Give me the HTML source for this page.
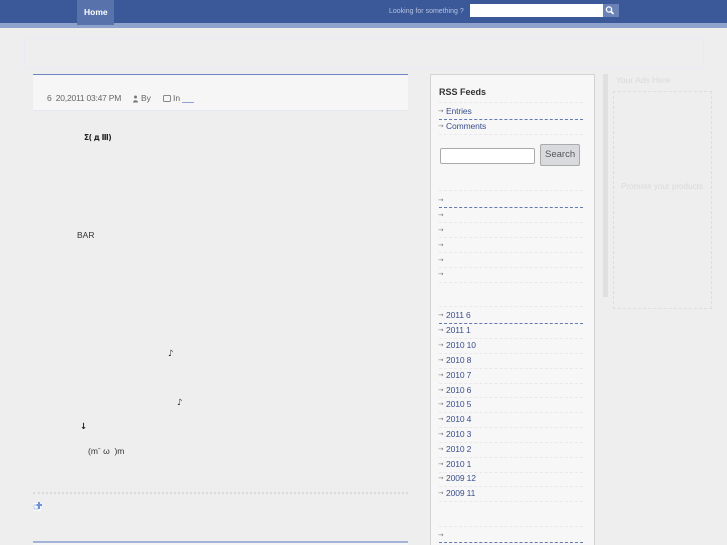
<!DOCTYPE html>
<html>
<head>
<meta charset="utf-8">
<style>
html,body{margin:0;padding:0;}
body{width:727px;height:545px;overflow:hidden;background:#eeeeee;position:relative;font-family:"Liberation Sans","DejaVu Sans","Noto Sans CJK JP",sans-serif;font-size:8.5px;color:#444;}
#w{position:absolute;left:0;top:0;width:727px;height:545px;overflow:hidden;filter:blur(.35px);}
.a{position:absolute;}
.t{position:absolute;white-space:nowrap;line-height:10px;}
.l{position:absolute;left:446px;color:#3b4f8c;white-space:nowrap;line-height:10px;font-size:8.5px;letter-spacing:-.12px;}
.ar{position:absolute;left:438px;width:7px;height:10px;color:#777;font-family:"DejaVu Sans",sans-serif;font-size:6.5px;}
.d{position:absolute;left:439px;width:144px;height:0;border-top:1px dashed #e9e9e9;}
.db{position:absolute;left:439px;width:144px;height:0;border-top:1px dashed #6579b0;}
.u{font-family:"DejaVu Sans",sans-serif;color:#222;}
</style>
</head>
<body>
<div id="w">
<div class="a" style="left:0;top:0;width:727px;height:23px;background:#3b5998;"></div>
<div class="a" style="left:0;top:23px;width:727px;height:5px;background:#8fa2cd;"></div>
<div class="a" style="left:77px;top:0;width:37px;height:25px;background:#5873ab;"></div>
<div class="t" style="left:84px;top:7px;color:#fff;font-weight:bold;font-size:8.5px;">Home</div>
<div class="t" style="left:389px;top:7px;color:#b4c2e0;font-size:7px;">Looking for something ?</div>
<div class="a" style="left:470px;top:4px;width:133px;height:13px;background:#fff;"></div>
<div class="a" style="left:603px;top:4px;width:16px;height:13px;background:#6a82b6;"></div>
<svg class="a" style="left:604px;top:5px;" width="12" height="11" viewBox="0 0 12 11"><circle cx="5" cy="4.500" r="2.600" fill="none" stroke="#fff" stroke-width="1.300"/><path d="M7 6.500L9.500 9" stroke="#fff" stroke-width="1.600"/></svg>

<div class="a" style="left:24px;top:38px;width:678px;height:28px;border:1px solid #e8ecf2;"></div>

<div class="a" style="left:33px;top:74px;width:375px;height:35px;background:#f6f6f6;border-top:1px solid #6f86c4;border-bottom:1px solid #e4e8f0;"></div>
<div class="t" style="left:47px;top:93px;color:#666;letter-spacing:-.22px;">6&nbsp; 20,2011 03:47 PM</div>
<svg class="a" style="left:132px;top:95px;" width="7" height="8" viewBox="0 0 7 8"><circle cx="3.500" cy="2" r="1.500" fill="#777"/><path d="M1 7.500C1 4.500 6 4.500 6 7.500Z" fill="#777"/></svg>
<div class="t" style="left:141px;top:93px;color:#666;">By</div>
<svg class="a" style="left:163px;top:95px;" width="8" height="7" viewBox="0 0 8 7"><rect x=".5" y=".5" width="7" height="6" rx="1" fill="none" stroke="#888"/></svg>
<div class="t" style="left:173px;top:93px;color:#666;">In</div>
<div class="a" style="left:182px;top:102px;width:12px;height:1px;background:#8fa3d0;"></div>

<div class="t u" style="left:84px;top:133px;font-size:7.5px;font-weight:bold;letter-spacing:-.45px;">Σ( д Ⅲ)</div>
<div class="t" style="left:77px;top:230px;color:#333;">BAR</div>
<div class="t u" style="left:168px;top:349px;">♪</div>
<div class="t u" style="left:177px;top:398px;">♪</div>
<div class="t u" style="left:80px;top:422px;font-weight:bold;">↓</div>
<div class="t" style="left:88px;top:446px;color:#333;font-size:8.5px;">(m&#713; ω&nbsp; )m</div>

<div class="a" style="left:33px;top:492px;width:375px;height:0;border-top:2px dotted #dadada;"></div>
<svg class="a" style="left:33px;top:501px;" width="10" height="11" viewBox="0 0 10 11"><rect x="0" y="2" width="8" height="8" fill="#f8f9fc"/><rect x="1" y="4" width="4" height="4" fill="none" stroke="#a9bde4" stroke-width=".8"/><path d="M6 1V8M3.500 4H9" stroke="#6f93d8" stroke-width="2"/></svg>
<div class="a" style="left:33px;top:541px;width:375px;height:2px;background:#a2b3d6;"></div>
<div class="a" style="left:33px;top:543px;width:375px;height:2px;background:#f6f6f6;"></div>

<div class="a" style="left:430px;top:74px;width:163px;height:471px;background:#f7f7f7;border:1px solid #d2d2d2;border-bottom:none;"></div>
<div class="t" style="left:439px;top:87px;color:#333;font-weight:bold;font-size:9px;">RSS Feeds</div>
<div class="d" style="top:102px;"></div>

<div class="t ar" style="top:106px;">→</div>
<div class="l" style="top:106px;">Entries</div>
<div class="db" style="top:119px;"></div>
<div class="t ar" style="top:121px;">→</div>
<div class="l" style="top:121px;">Comments</div>
<div class="d" style="top:134px;"></div>

<div class="a" style="left:440px;top:148px;width:93px;height:14px;background:#fff;border:1px solid #aaa;border-radius:2px;"></div>
<div class="a" style="left:540px;top:144px;width:38px;height:20px;background:#d8dade;border:1px solid #aaa;border-radius:2px;"></div>
<div class="t" style="left:545px;top:150px;color:#555;font-size:9.5px;">Search</div>

<div class="d" style="top:190px;"></div>
<div class="t ar" style="top:195px;">→</div>
<div class="db" style="top:207px;"></div>
<div class="t ar" style="top:210px;">→</div>
<div class="d" style="top:222px;"></div>
<div class="t ar" style="top:225px;">→</div>
<div class="d" style="top:237px;"></div>
<div class="t ar" style="top:240px;">→</div>
<div class="d" style="top:252px;"></div>
<div class="t ar" style="top:255px;">→</div>
<div class="d" style="top:267px;"></div>
<div class="t ar" style="top:269px;">→</div>
<div class="d" style="top:282px;"></div>

<div class="d" style="top:306px;"></div>
<div class="t ar" style="top:310px;">→</div>
<div class="l" style="top:310px;">2011 6</div>
<div class="db" style="top:323px;"></div>
<div class="t ar" style="top:325px;">→</div>
<div class="l" style="top:325px;">2011 1</div>
<div class="d" style="top:338px;"></div>
<div class="t ar" style="top:340px;">→</div>
<div class="l" style="top:340px;">2010 10</div>
<div class="d" style="top:353px;"></div>
<div class="t ar" style="top:355px;">→</div>
<div class="l" style="top:355px;">2010 8</div>
<div class="d" style="top:368px;"></div>
<div class="t ar" style="top:370px;">→</div>
<div class="l" style="top:370px;">2010 7</div>
<div class="d" style="top:383px;"></div>
<div class="t ar" style="top:385px;">→</div>
<div class="l" style="top:385px;">2010 6</div>
<div class="d" style="top:397px;"></div>
<div class="t ar" style="top:399px;">→</div>
<div class="l" style="top:399px;">2010 5</div>
<div class="d" style="top:412px;"></div>
<div class="t ar" style="top:414px;">→</div>
<div class="l" style="top:414px;">2010 4</div>
<div class="d" style="top:427px;"></div>
<div class="t ar" style="top:429px;">→</div>
<div class="l" style="top:429px;">2010 3</div>
<div class="d" style="top:442px;"></div>
<div class="t ar" style="top:444px;">→</div>
<div class="l" style="top:444px;">2010 2</div>
<div class="d" style="top:457px;"></div>
<div class="t ar" style="top:459px;">→</div>
<div class="l" style="top:459px;">2010 1</div>
<div class="d" style="top:472px;"></div>
<div class="t ar" style="top:473px;">→</div>
<div class="l" style="top:473px;">2009 12</div>
<div class="d" style="top:486px;"></div>
<div class="t ar" style="top:488px;">→</div>
<div class="l" style="top:488px;">2009 11</div>
<div class="d" style="top:501px;"></div>
<div class="d" style="top:526px;"></div>
<div class="t ar" style="top:530px;">→</div>
<div class="db" style="top:542px;"></div>

<div class="a" style="left:603px;top:74px;width:5px;height:223px;background:#e0e0e0;"></div>
<div class="t" style="left:616px;top:75px;color:#dadada;font-size:8.5px;">Your Ads Here</div>
<div class="a" style="left:613px;top:91px;width:97px;height:216px;border:1px dashed #dedede;"></div>
<div class="t" style="left:621px;top:182px;color:#dadada;font-size:8.1px;">Promote your products</div>
</div>
</body>
</html>
